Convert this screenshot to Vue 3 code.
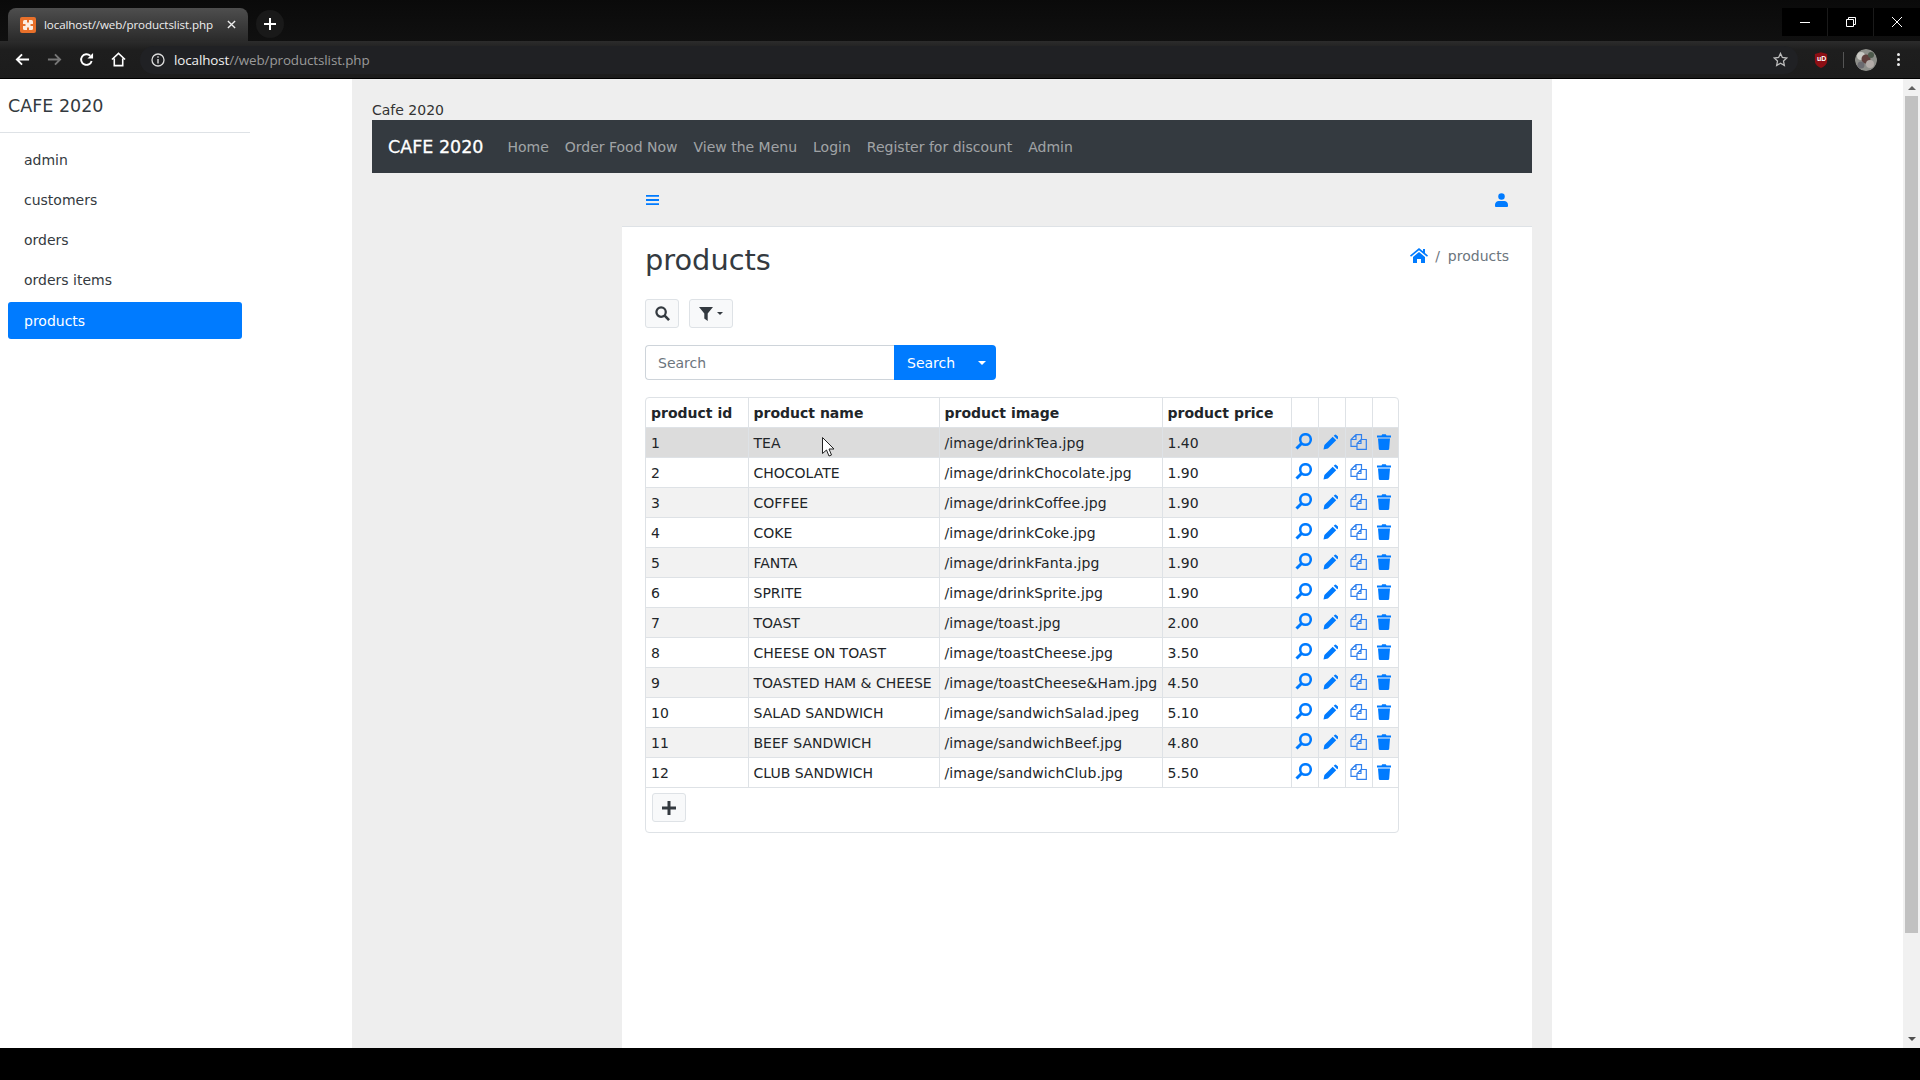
<script setup>
const sideItems = ['admin', 'customers', 'orders', 'orders items', 'products']
const navLinks = ['Home', 'Order Food Now', 'View the Menu', 'Login', 'Register for discount', 'Admin']
const products = [
  [1, 'TEA', '/image/drinkTea.jpg', '1.40'],
  [2, 'CHOCOLATE', '/image/drinkChocolate.jpg', '1.90'],
  [3, 'COFFEE', '/image/drinkCoffee.jpg', '1.90'],
  [4, 'COKE', '/image/drinkCoke.jpg', '1.90'],
  [5, 'FANTA', '/image/drinkFanta.jpg', '1.90'],
  [6, 'SPRITE', '/image/drinkSprite.jpg', '1.90'],
  [7, 'TOAST', '/image/toast.jpg', '2.00'],
  [8, 'CHEESE ON TOAST', '/image/toastCheese.jpg', '3.50'],
  [9, 'TOASTED HAM & CHEESE', '/image/toastCheese&Ham.jpg', '4.50'],
  [10, 'SALAD SANDWICH', '/image/sandwichSalad.jpeg', '5.10'],
  [11, 'BEEF SANDWICH', '/image/sandwichBeef.jpg', '4.80'],
  [12, 'CLUB SANDWICH', '/image/sandwichClub.jpg', '5.50'],
]
</script>

<template>
  <div class="screen">
    <div class="tabstrip">
      <div class="tab">
        <svg class="favicon" viewBox="0 0 16 16">
          <rect width="16" height="16" rx="2" fill="#e8702a" />
          <rect x="3" y="3" width="10" height="10" rx="1.500" fill="#fdeee2" />
          <path d="M7 3h2v2.500H7zM7 10.500h2V13H7zM3 7h2.500v2H3zM10.500 7H13v2h-2.500z" fill="#e8702a" />
        </svg>
        <span class="tab-title">localhost//web/productslist.php</span>
        <svg class="tab-x" viewBox="0 0 10 10"><path d="M1 1l8 8M9 1l-8 8" stroke="#eee" stroke-width="1.500" /></svg>
      </div>
      <div class="newtab">
        <svg viewBox="0 0 12 12" width="12" height="12"><path d="M6 0v12M0 6h12" stroke="#fff" stroke-width="2" /></svg>
      </div>
      <div class="winbtns">
        <svg viewBox="0 0 46 28" width="46" height="28"><path d="M18 14.500h10" stroke="#fff" /></svg>
        <svg viewBox="0 0 46 28" width="46" height="28"><path d="M18.500 11.500h7v7h-7zM20.500 11.500v-2h7v7h-2" fill="none" stroke="#fff" /></svg>
        <svg viewBox="0 0 46 28" width="46" height="28"><path d="M18 9l10 10M28 9L18 19" stroke="#fff" /></svg>
      </div>
    </div>

    <div class="toolbar">
      <svg class="tool" viewBox="0 0 16 16"><path d="M15 8H2M7.500 2.500L2 8l5.500 5.500" fill="none" stroke="#fff" stroke-width="2" /></svg>
      <svg class="tool dim" viewBox="0 0 16 16"><path d="M1 8h13M8.500 2.500L14 8l-5.500 5.500" fill="none" stroke="#777" stroke-width="2" /></svg>
      <svg class="tool" viewBox="0 0 16 16"><path d="M13.500 9.500A5.700 5.700 0 1 1 12 4" fill="none" stroke="#fff" stroke-width="2" /><path d="M15 1v6H9z" fill="#fff" /></svg>
      <svg class="tool" viewBox="0 0 16 16"><path d="M1 8l7-6.500L15 8M3.500 7v7.500h9V7" fill="none" stroke="#fff" stroke-width="1.700" /></svg>
      <div class="omnibox">
        <svg class="info" viewBox="0 0 14 14"><circle cx="7" cy="7" r="6" fill="none" stroke="#ddd" stroke-width="1.300" /><path d="M7 6v4.500M7 3.200v1.500" stroke="#ddd" stroke-width="1.400" /></svg>
        <span class="host">localhost</span><span class="path">//web/productslist.php</span>
        <svg class="star" viewBox="0 0 16 16"><path d="M8 1.500l2 4.300 4.700.6-3.500 3.200.9 4.700L8 12l-4.100 2.300.9-4.700L1.300 6.400 6 5.800z" fill="none" stroke="#bbb" stroke-width="1.400" /></svg>
      </div>
      <div class="ublock"><svg viewBox="0 0 16 18" width="14" height="16"><path d="M8 0l7 2v8c0 4-4 7-7 8-3-1-7-4-7-8V2z" fill="#8d0f14" /></svg><span>uD</span></div>
      <div class="tool-sep"></div>
      <svg class="avatar" viewBox="0 0 22 22">
        <circle cx="11" cy="11" r="11" fill="#8e8f8a" />
        <circle cx="6" cy="7" r="4" fill="#c9c9c4" />
        <circle cx="11" cy="10" r="4.500" fill="#5f3f3c" />
        <circle cx="16" cy="6" r="3" fill="#4d5a4c" />
        <circle cx="15" cy="15" r="4" fill="#b3aca8" />
        <circle cx="6" cy="16" r="3.500" fill="#6b6b70" />
      </svg>
      <div class="kebab"><i></i><i></i><i></i></div>
    </div>

    <div class="page">
      <aside class="sidebar">
        <div class="side-brand">CAFE 2020</div>
        <nav class="side-nav">
          <a v-for="item in sideItems" :key="item" :class="{ active: item === 'products' }">{{ item }}</a>
        </nav>
      </aside>

      <main class="main">
        <div class="site-title">Cafe 2020</div>
        <div class="navbar">
          <span class="navbar-brand">CAFE 2020</span>
          <a v-for="link in navLinks" :key="link">{{ link }}</a>
        </div>
        <div class="body-row">
          <div class="inner">
            <div class="topbar">
              <svg class="bars" viewBox="0 0 14 12"><path d="M0 1.500h14M0 6h14M0 10.500h14" stroke="#007bff" stroke-width="2" /></svg>
              <svg class="user" viewBox="0 0 14 15">
                <circle cx="7" cy="3.800" r="3.500" fill="#007bff" />
                <path d="M1 15a1 1 0 0 1-1-1v-1.500C0 10 2 8.500 4 8.500h6c2 0 4 1.500 4 4V14a1 1 0 0 1-1 1z" fill="#007bff" />
              </svg>
            </div>
            <div class="content">
              <div class="head-row">
                <h1>products</h1>
                <div class="crumbs">
                  <svg class="crumb-home" viewBox="0 0 18 15"><path d="M9 0l4 3.300V1h2v4l3 2.500-1 1.200L9 2.300 1 8.700 0 7.500z" fill="#007bff" /><path d="M3 9l6-5 6 5v6h-4v-4H7v4H3z" fill="#007bff" /></svg>
                  <span class="crumb-sep">/</span>
                  <span class="crumb-cur">products</span>
                </div>
              </div>
              <div class="tool-btns">
                <button class="lite search-btn">
                  <svg viewBox="0 0 16 16" width="15" height="15"><circle cx="6.500" cy="6.500" r="5" fill="none" stroke="#343a40" stroke-width="2.400" /><path d="M10.300 10.300L15 15" stroke="#343a40" stroke-width="2.800" /></svg>
                </button>
                <button class="lite filter-btn">
                  <svg viewBox="0 0 14 14" width="14" height="14"><path d="M0 0h14L8.700 6.500V14l-3.400-2.500V6.500z" fill="#343a40" /></svg>
                  <i class="caret dark"></i>
                </button>
              </div>
              <div class="search-group">
                <div class="search-input">Search</div>
                <div class="search-submit"><span>Search</span><i class="caret"></i></div>
              </div>
              <div class="table-card">
                <table>
                  <colgroup>
                    <col style="width: 102px" /><col style="width: 191px" /><col style="width: 223px" /><col style="width: 129px" />
                    <col style="width: 27px" /><col style="width: 27px" /><col style="width: 27px" /><col style="width: 26px" />
                  </colgroup>
                  <thead>
                    <tr>
                      <th>product id</th><th>product name</th><th>product image</th><th>product price</th>
                      <th></th><th></th><th></th><th></th>
                    </tr>
                  </thead>
                  <tbody>
                    <tr v-for="(row, i) in products" :key="row[0]" :class="{ hover: i === 0, odd: i % 2 === 0 }">
                      <td>{{ row[0] }}</td><td>{{ row[1] }}</td><td class="img-cell">{{ row[2] }}</td><td>{{ row[3] }}</td>
                      <td class="ic"><svg viewBox="0 0 17 17" class="i-search"><circle cx="10.500" cy="6.500" r="5.300" fill="none" stroke="#007bff" stroke-width="2.500" /><path d="M6.500 10.500L1.500 15.500" stroke="#007bff" stroke-width="3" /></svg></td>
                      <td class="ic"><svg viewBox="0 0 15 16" class="i-pencil"><path d="M.5 15.500l.9-4.400L9.700 2.800l3.500 3.500-8.300 8.300zM10.700 1.800l.9-.9a1.200 1.200 0 0 1 1.700 0l1.800 1.800a1.200 1.200 0 0 1 0 1.700l-.9.900z" fill="#007bff" /></svg></td>
                      <td class="ic"><svg viewBox="0 0 17 16" class="i-copy"><path d="M11.500 5V.7H6L1 5.500v6.800h6M6 .7v4.800H1M11 5.500h5.300v9.800H7V9.500zM11 5.500v4H7" fill="none" stroke="#2f80ee" stroke-width="1.200" /></svg></td>
                      <td class="ic"><svg viewBox="0 0 14 16" class="i-trash"><path d="M0 1.500h4.500L5.200.2h3.600l.7 1.300H14v2H0zM1 4.500h12l-.8 10.300a1.300 1.300 0 0 1-1.300 1.200H3.100a1.300 1.300 0 0 1-1.300-1.200z" fill="#007bff" /></svg></td>
                    </tr>
                  </tbody>
                </table>
                <div class="card-foot">
                  <button class="lite add-btn">
                    <svg viewBox="0 0 14 14" width="14" height="14"><path d="M7 0v14M0 7h14" stroke="#343a40" stroke-width="3" /></svg>
                  </button>
                </div>
              </div>
            </div>
          </div>
        </div>
        <svg class="cursor" viewBox="0 0 12 20" width="12" height="20"><path d="M.5.500v16l4-3.500 2.500 6 2.500-1-2.500-6H12z" fill="#fff" stroke="#222" /></svg>
      </main>

      <div class="right-blank"></div>
      <div class="scrollbar">
        <i class="arrow up"></i>
        <div class="thumb"></div>
        <i class="arrow down"></i>
      </div>
    </div>
    <div class="bottom"></div>
  </div>
</template>

<style>
html, body { margin: 0; height: 100%; overflow: hidden; background: #000; }
</style>

<style scoped>
.screen {
  width: 1920px;
  height: 1080px;
  display: flex;
  flex-direction: column;
  font-family: "DejaVu Sans", sans-serif;
  font-size: 14px;
  color: #212529;
  background: #000;
}
.tabstrip {
  height: 41px;
  padding: 8px 0 0 8px;
  box-sizing: border-box;
  display: flex;
  background: linear-gradient(#0a0a0a, #101010);
  flex: none;
  position: relative;
}
.tab {
  width: 240px;
  height: 33px;
  border-radius: 8px 8px 0 0;
  background: linear-gradient(#4e4e4e, #2a2a2a);
  display: flex;
  align-items: center;
  padding: 0 12px;
  box-sizing: border-box;
  gap: 8px;
}
.favicon { width: 16px; height: 16px; flex: none; margin-top: 1px; }
.tab-title {
  font-family: "Open Sans", sans-serif;
  font-size: 11.600px;
  color: #eee;
  white-space: nowrap;
  flex: 1;
  letter-spacing: -.1px;
}
.tab-x { width: 9px; height: 9px; flex: none; }
.newtab {
  width: 28px;
  height: 28px;
  margin: 2px 0 0 8px;
  border-radius: 50%;
  background: #191919;
  display: flex;
  align-items: center;
  justify-content: center;
}
.winbtns {
  position: absolute;
  right: 0;
  top: 8px;
  display: flex;
  background: #000;
}
.winbtns svg + svg { border-left: 1px solid #1a1a1a; margin-left: -1px; }
.toolbar {
  height: 37px;
  flex: none;
  display: flex;
  align-items: center;
  padding-left: 15px;
  background: linear-gradient(#2c2c2c, #1e1e1e 25%, #1c1c1c);
  border-bottom: 1px solid #000;
}
.tool { width: 15px; height: 15px; margin-right: 17px; flex: none; }
.omnibox {
  width: 1658px;
  height: 28px;
  margin-left: -3px;
  padding-left: 11px;
  display: flex;
  align-items: center;
  flex: none;
  box-sizing: border-box;
  background: #202124;
  border-radius: 14px;
  font-family: "Open Sans", sans-serif;
  font-size: 13.400px;
  letter-spacing: -.1px;
}
.info { width: 14px; height: 14px; margin-right: 9px; }
.host { color: #f0f0f0; }
.path { color: #9a9a9a; }
.star { width: 15px; height: 15px; margin-left: auto; margin-right: 10px; }
.ublock {
  margin-left: 16px;
  width: 14px;
  height: 16px;
  position: relative;
  flex: none;
}
.ublock span {
  position: absolute;
  left: 3px;
  top: 3px;
  font: bold 7px "Liberation Sans", sans-serif;
  color: #fff;
}
.tool-sep { width: 1px; height: 16px; background: #555; margin: 0 11px 0 15px; flex: none; }
.avatar { width: 22px; height: 22px; border-radius: 50%; flex: none; }
.kebab { display: flex; flex-direction: column; gap: 2px; margin-left: 20px; flex: none; }
.kebab i { width: 3px; height: 3px; background: #eee; border-radius: 50%; }

.page { flex: 1; min-height: 0; display: flex; overflow: hidden; background: #fff; }
.sidebar { width: 352px; flex: none; background: #fff; }
.side-brand {
  width: 250px;
  height: 54px;
  box-sizing: border-box;
  padding: 17px 0 0 8px;
  font-size: 17.500px;
  line-height: 21px;
  color: #343a40;
  border-bottom: 1px solid #dee2e6;
}
.side-nav { width: 234px; margin: 7px 0 0 8px; display: flex; flex-direction: column; }
.side-nav a {
  height: 40px;
  line-height: 40px;
  padding-left: 16px;
  color: #343a40;
  border-radius: 3px;
}
.side-nav a.active { height: 37px; line-height: 39px; margin-top: 2px; background: #007bff; color: #fff; }

.main { width: 1200px; flex: none; background: #eeeeee; padding: 0 20px; box-sizing: border-box; position: relative; }
.site-title { height: 41px; padding-top: 21px; box-sizing: border-box; line-height: 20px; color: #333; }
.navbar {
  height: 53px;
  background: #343a40;
  display: flex;
  align-items: center;
  padding-left: 16px;
  color: rgba(255, 255, 255, .55);
}
.navbar-brand { font-size: 17.500px; color: #fff; margin-right: 16px; -webkit-text-stroke: .3px #fff; }
.navbar a { padding: 0 8px; }
.body-row { display: flex; justify-content: flex-end; }
.inner { width: 910px; }
.topbar {
  height: 54px;
  display: flex;
  align-items: center;
  justify-content: space-between;
  padding: 0 24px 0 24px;
  box-sizing: border-box;
  border-bottom: 1px solid #dee2e6;
}
.bars { width: 13px; height: 12px; }
.user { width: 13px; height: 14px; }
.content { background: #fff; height: 821px; padding: 0 23px; box-sizing: border-box; }
.head-row { display: flex; justify-content: space-between; height: 72px; }
h1 { margin: 16px 0 0; font-weight: 400; font-size: 28.800px; line-height: 34px; color: #343a40; }
.crumbs { display: flex; align-items: center; height: 20px; margin-top: 19px; gap: 7px; }
.crumb-home { width: 18px; height: 15px; margin: -2px 0 0 -1px; }
.crumb-sep, .crumb-cur { color: #6c757d; }
.crumb-sep { margin-right: 1px; }
.tool-btns { display: flex; gap: 10px; height: 30px; }
.lite {
  background: #f8f9fa;
  border: 1px solid #dee2e6;
  border-radius: 3px;
  padding: 0;
  display: flex;
  align-items: center;
  justify-content: center;
}
.search-btn { width: 34px; height: 29px; }
.filter-btn { width: 44px; height: 29px; gap: 4px; }
.caret {
  width: 0;
  height: 0;
  border: 4px solid transparent;
  border-top-color: #fff;
  border-bottom: 0;
  display: block;
}
.caret.dark { border-top-color: #343a40; border-width: 3px; border-bottom: 0; }
.search-group { display: flex; margin-top: 16px; height: 35px; }
.search-input {
  width: 249px;
  box-sizing: border-box;
  border: 1px solid #ced4da;
  border-right: 0;
  border-radius: 4px 0 0 4px;
  padding-left: 12px;
  line-height: 34px;
  color: #6c757d;
}
.search-submit {
  width: 102px;
  background: #007bff;
  color: #fff;
  border-radius: 0 4px 4px 0;
  display: flex;
  align-items: center;
  justify-content: space-between;
  padding: 0 10px 0 13px;
  box-sizing: border-box;
}
.table-card {
  width: 754px;
  margin-top: 17px;
  border: 1px solid #dee2e6;
  border-radius: 4px;
  box-sizing: border-box;
  height: 436px;
}
table {
  table-layout: fixed;
  border-collapse: collapse;
  width: 752px;
}
th, td {
  border-left: 1px solid #dee2e6;
  border-bottom: 1px solid #dee2e6;
  padding: 0 5px;
  text-align: left;
  white-space: nowrap;
  overflow: hidden;
}
th:first-child, td:first-child { border-left: 0; }
th { height: 29px; font-weight: 700; }
td { height: 30px; box-sizing: border-box; padding-top: 1px; font-size: 14px; }
td.img-cell { letter-spacing: .1px; }
tr.odd td { background: #f2f2f2; }
tr.hover td { background: #dcdcdc; }
td.ic { padding: 0 0 0 4px; }
td.ic svg { display: block; margin-bottom: 2px; }
.i-search { width: 17px; height: 17px; margin-left: -1px; }
.i-pencil { width: 15px; height: 16px; }
.i-copy { width: 17px; height: 16px; }
.i-trash { width: 14px; height: 16px; }
.card-foot { padding: 5px 6px; }
.add-btn { width: 34px; height: 29px; }
.cursor { position: absolute; left: 470px; top: 358px; }

.right-blank { flex: 1; background: #fff; }
.scrollbar {
  width: 17px;
  flex: none;
  background: #f1f1f1;
  position: relative;
  padding-top: 17px;
  box-sizing: border-box;
}
.thumb { height: 837px; margin: 0 2px; background: #c1c1c1; }
.arrow { position: absolute; left: 5px; width: 0; height: 0; border: 4px solid transparent; }
.arrow.up { top: 7px; border-bottom: 4px solid #606060; border-top: 0; }
.arrow.down { bottom: 7px; border-top: 4px solid #505050; border-bottom: 0; }
.bottom { height: 32px; flex: none; background: #000; }
</style>
